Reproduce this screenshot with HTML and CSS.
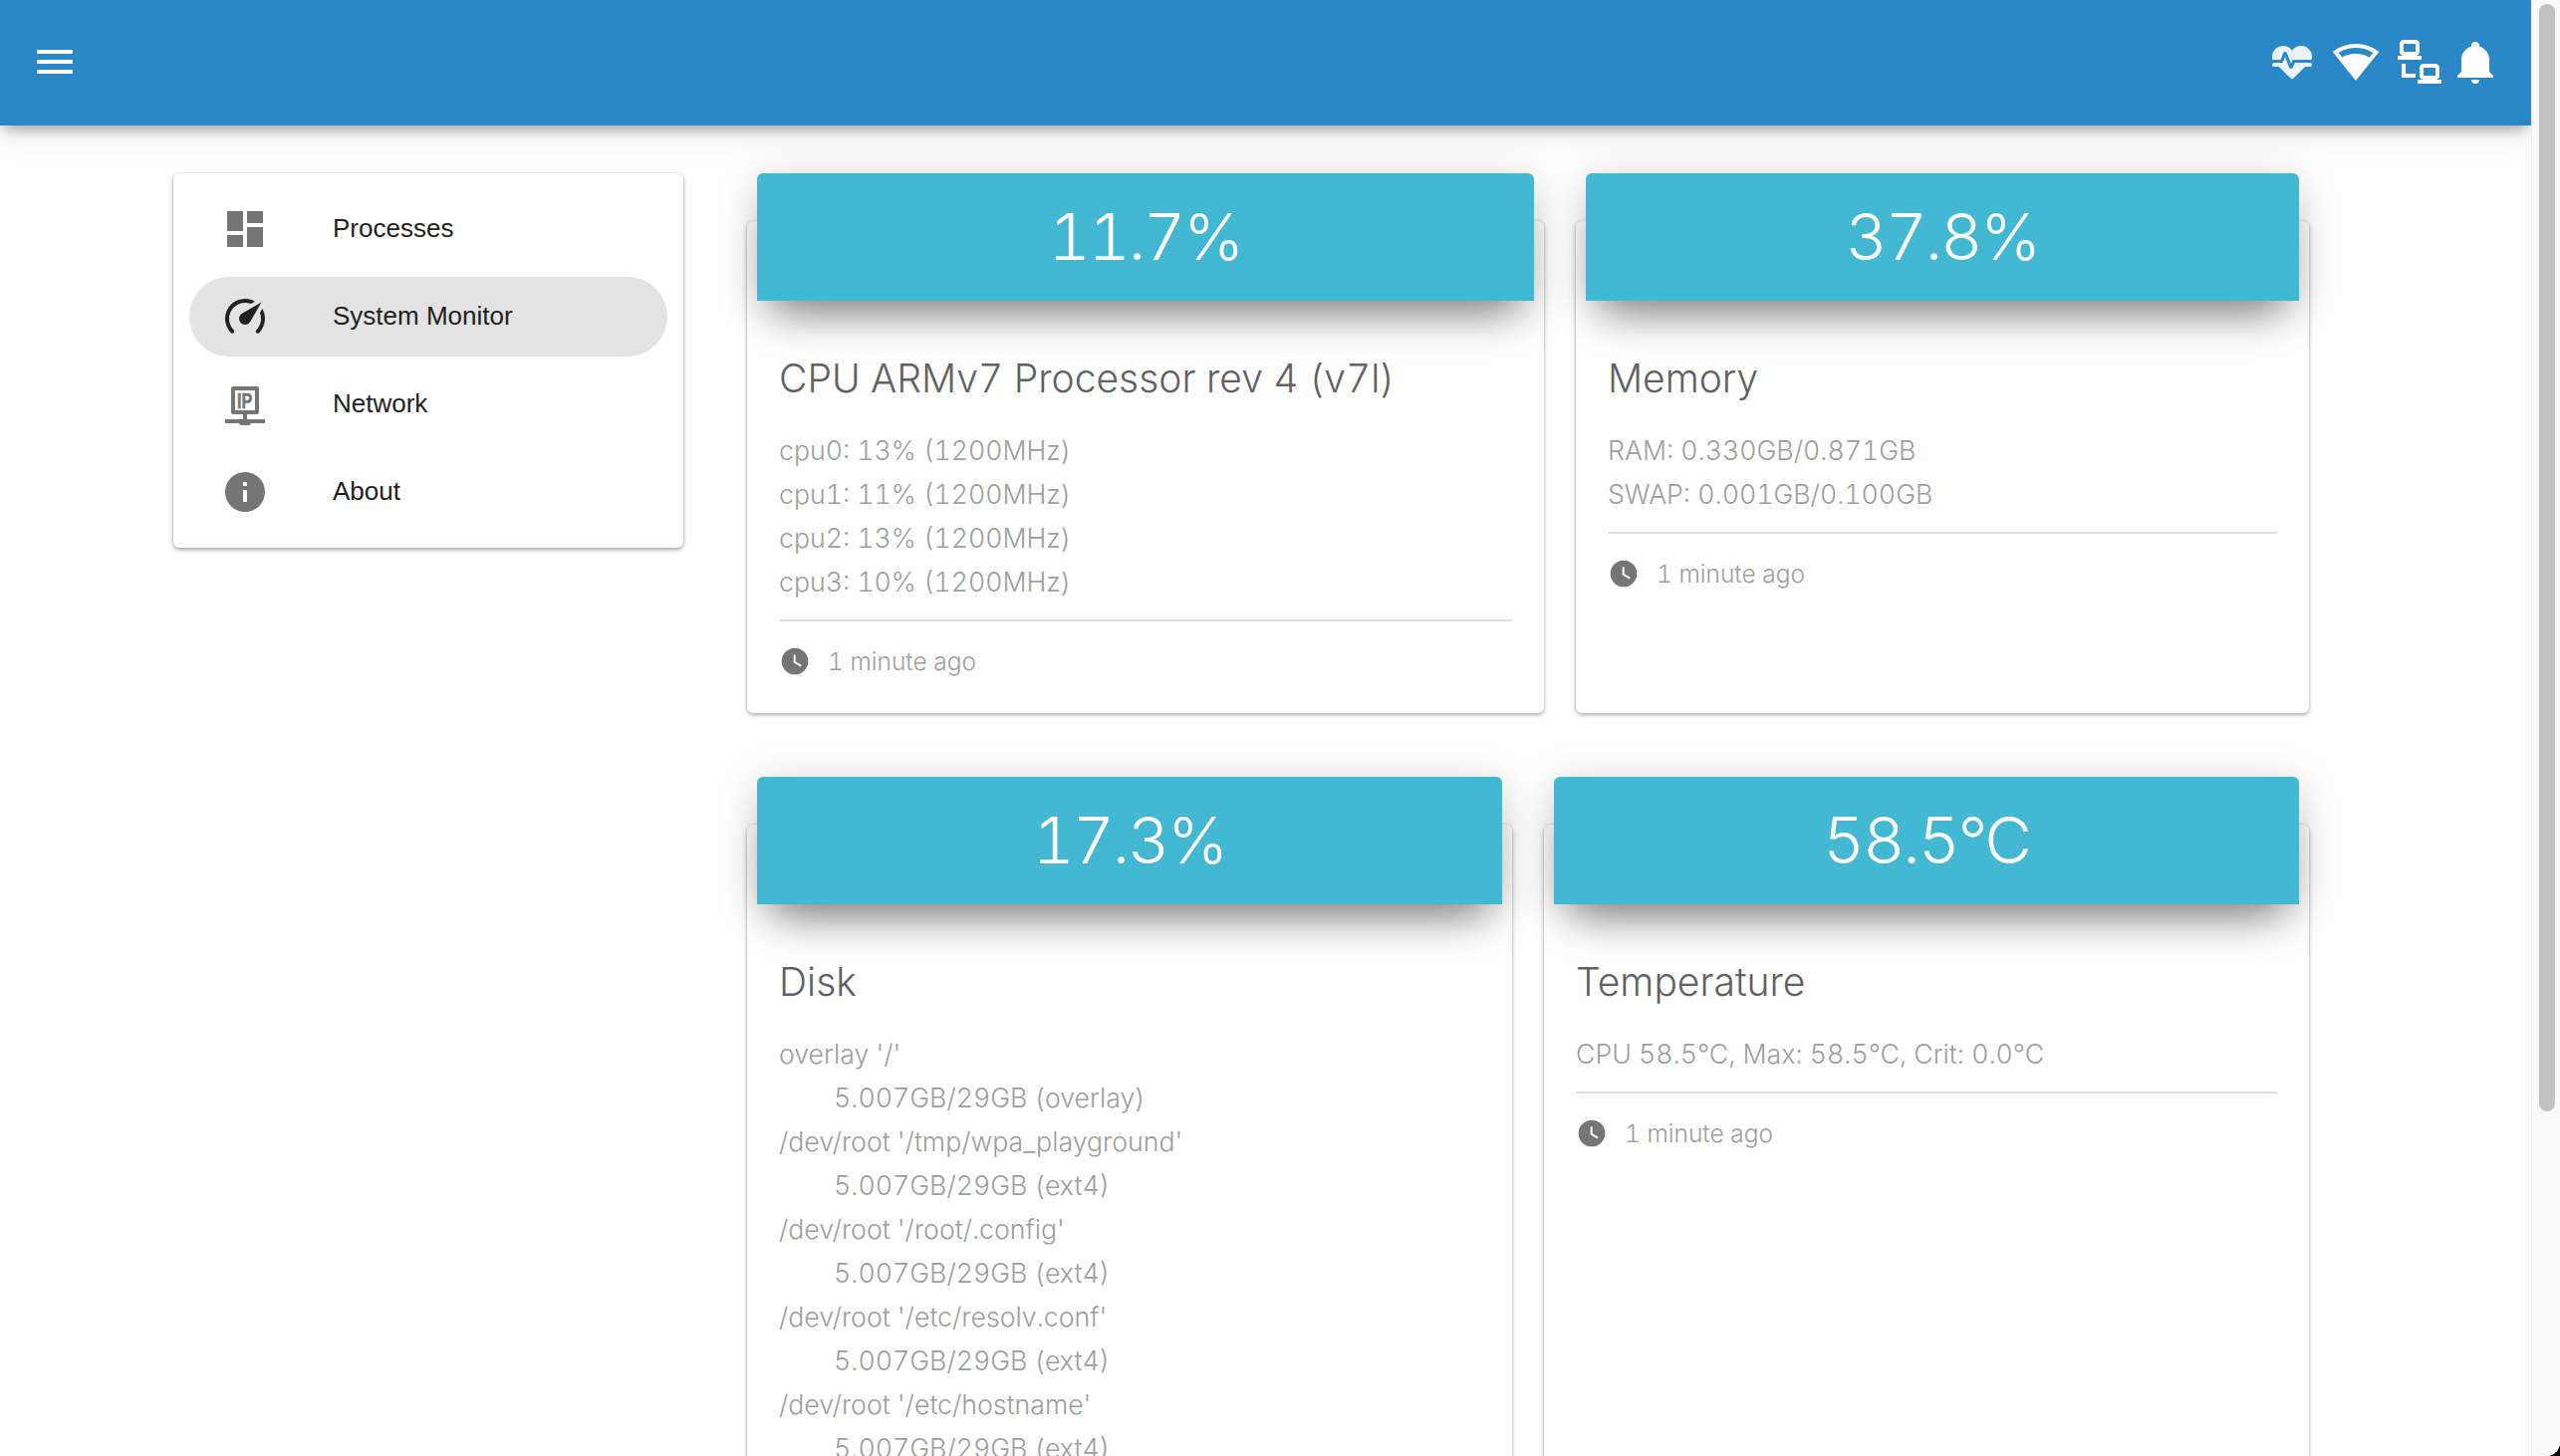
FILE: index.html
```html
<!DOCTYPE html>
<html lang="en">
<head>
<meta charset="UTF-8" />
<meta name="viewport" content="width=device-width, initial-scale=1" />
<title>System Monitor</title>
<link rel="stylesheet" href="styles.css">
</head>
<body>

<div class="window">
  <div class="viewport">
    <header class="app-bar">
      <svg class="icon menu-btn" viewBox="0 0 24 24"><path d="M3,6H21V8H3V6M3,11H21V13H3V11M3,16H21V18H3V16Z"/></svg>
      <div class="status-icons">
        <svg class="icon status-heart" viewBox="0 0 24 24"><path d="M7.5,4A5.5,5.5 0 0,0 2,9.5C2,10 2.09,10.5 2.22,11H6.3L7.57,7.63C7.87,6.83 9.05,6.75 9.43,7.63L11.5,13L12.09,11.58C12.22,11.25 12.57,11 13,11H21.78C21.91,10.5 22,10 22,9.5A5.5,5.5 0 0,0 16.5,4C14.64,4 13,4.93 12,6.34C11,4.93 9.36,4 7.5,4V4M3,12.5A1,1 0 0,0 2,13.5A1,1 0 0,0 3,14.5H5.44L11,20C12,20.9 12,20.9 13,20L18.56,14.5H21A1,1 0 0,0 22,13.5A1,1 0 0,0 21,12.5H13.4L12.47,14.8C12.07,15.81 10.92,15.67 10.55,14.83L8.5,9.5L7.54,11.83C7.39,12.21 7.05,12.5 6.6,12.5H3Z"/></svg>
        <svg class="icon" viewBox="0 0 24 24"><path fill-rule="evenodd" d="M12,3C7.79,3 3.7,4.41 0.38,7C4.41,12.06 7.89,16.37 12,21.5C16.08,16.42 20.24,11.24 23.65,7C20.32,4.41 16.22,3 12,3M12,5C15.07,5 18.09,5.86 20.71,7.45L18.77,9.88C17.26,8.68 14.96,8 12,8C9,8 6.74,8.69 5.27,9.8L3.27,7.44C5.91,5.85 8.93,5 12,5Z"/></svg>
        <svg class="icon" viewBox="0 0 24 24"><path d="M4,1C2.89,1 2,1.89 2,3V7C2,8.11 2.89,9 4,9H1V11H13V9H10C11.11,9 12,8.11 12,7V3C12,1.89 11.11,1 10,1H4M4,3H10V7H4V3M3,13V18L3,20H10V18H5V13H3M14,13C12.89,13 12,13.89 12,15V19C12,20.11 12.89,21 14,21H11V23H23V21H20C21.11,21 22,20.11 22,19V15C22,13.89 21.11,13 20,13H14M14,15H20V19H14V15Z"/></svg>
        <svg class="icon status-bell" viewBox="0 0 24 24"><path d="M21,19V20H3V19L5,17V11C5,7.9 7.03,5.17 10,4.29C10,4.19 10,4.1 10,4A2,2 0 0,1 12,2A2,2 0 0,1 14,4C14,4.1 14,4.19 14,4.29C16.97,5.17 19,7.9 19,11V17L21,19M14,21A2,2 0 0,1 12,23A2,2 0 0,1 10,21"/></svg>
      </div>
    </header>

    <div class="page">
      <nav class="side-menu">
        <a class="menu-item">
          <svg class="icon" viewBox="0 0 24 24"><path d="M3,13h8V3H3v10zm0,8h8v-6H3v6zm10,0h8V11h-8v10zm0-18v6h8V3h-8z"/></svg>
          <span>Processes</span>
        </a>
        <a class="menu-item active">
          <svg class="icon" viewBox="0 0 24 24"><path d="M12,16A3,3 0 0,1 9,13C9,11.88 9.61,10.9 10.5,10.39L20.21,4.77L14.68,14.35C14.18,15.33 13.17,16 12,16M12,3C13.81,3 15.5,3.5 16.97,4.32L14.87,5.53C14,5.19 13,5 12,5A8,8 0 0,0 4,13C4,15.21 4.89,17.21 6.34,18.65H6.35C6.74,19.04 6.74,19.67 6.35,20.06C5.96,20.45 5.32,20.45 4.93,20.07V20.07C3.12,18.26 2,15.76 2,13A10,10 0 0,1 12,3M22,13C22,15.76 20.88,18.26 19.07,20.07V20.07C18.68,20.45 18.05,20.45 17.66,20.06C17.27,19.67 17.27,19.04 17.66,18.65V18.65C19.11,17.2 20,15.21 20,13C20,12 19.81,11 19.46,10.1L20.67,8C21.5,9.5 22,11.18 22,13Z"/></svg>
          <span>System Monitor</span>
        </a>
        <a class="menu-item">
          <svg class="icon" viewBox="0 0 24 24">
            <path fill-rule="evenodd" d="M6,3H18A1,1 0 0,1 19,4V16A1,1 0 0,1 18,17H13V19.5H22V21.5H15C14.8,22.1 14.4,22.5 14,22.5H10C9.6,22.5 9.2,22.1 9,21.5H2V19.5H11V17H6A1,1 0 0,1 5,16V4A1,1 0 0,1 6,3M7,5V15H17V5H7Z"/>
            <text class="ip-label" x="8" y="14" textLength="7.6" lengthAdjust="spacingAndGlyphs">IP</text>
          </svg>
          <span>Network</span>
        </a>
        <a class="menu-item">
          <svg class="icon" viewBox="0 0 24 24"><path d="M13,9H11V7H13M13,17H11V11H13M12,2A10,10 0 0,0 2,12A10,10 0 0,0 12,22A10,10 0 0,0 22,12A10,10 0 0,0 12,2Z"/></svg>
          <span>About</span>
        </a>
      </nav>

      <main class="cards">
        <div class="card-row">
          <section class="card card-wide">
            <div class="card-header">11.7%</div>
            <h4 class="card-title">CPU ARMv7 Processor rev 4 (v7l)</h4>
            <p class="card-line">cpu0: 13% (1200MHz)</p>
            <p class="card-line">cpu1: 11% (1200MHz)</p>
            <p class="card-line">cpu2: 13% (1200MHz)</p>
            <p class="card-line">cpu3: 10% (1200MHz)</p>
            <div class="card-footer">
              <svg class="clock" viewBox="0 0 24 24"><path d="M12,2A10,10 0 0,0 2,12A10,10 0 0,0 12,22A10,10 0 0,0 22,12A10,10 0 0,0 12,2M16.2,16.2L11,13V7H12.5V12.2L17,14.9L16.2,16.2Z"/></svg>
              <span>1 minute ago</span>
            </div>
          </section>
          <section class="card card-narrow">
            <div class="card-header">37.8%</div>
            <h4 class="card-title">Memory</h4>
            <p class="card-line">RAM: 0.330GB/0.871GB</p>
            <p class="card-line">SWAP: 0.001GB/0.100GB</p>
            <div class="card-footer">
              <svg class="clock" viewBox="0 0 24 24"><path d="M12,2A10,10 0 0,0 2,12A10,10 0 0,0 12,22A10,10 0 0,0 22,12A10,10 0 0,0 12,2M16.2,16.2L11,13V7H12.5V12.2L17,14.9L16.2,16.2Z"/></svg>
              <span>1 minute ago</span>
            </div>
          </section>
        </div>
        <div class="card-row">
          <section class="card card-half">
            <div class="card-header">17.3%</div>
            <h4 class="card-title">Disk</h4>
            <p class="card-line">overlay '/'</p>
            <p class="card-line indent">5.007GB/29GB (overlay)</p>
            <p class="card-line">/dev/root '/tmp/wpa_playground'</p>
            <p class="card-line indent">5.007GB/29GB (ext4)</p>
            <p class="card-line">/dev/root '/root/.config'</p>
            <p class="card-line indent">5.007GB/29GB (ext4)</p>
            <p class="card-line">/dev/root '/etc/resolv.conf'</p>
            <p class="card-line indent">5.007GB/29GB (ext4)</p>
            <p class="card-line">/dev/root '/etc/hostname'</p>
            <p class="card-line indent">5.007GB/29GB (ext4)</p>
          </section>
          <section class="card card-half">
            <div class="card-header">58.5°C</div>
            <h4 class="card-title">Temperature</h4>
            <p class="card-line">CPU 58.5°C, Max: 58.5°C, Crit: 0.0°C</p>
            <div class="card-footer">
              <svg class="clock" viewBox="0 0 24 24"><path d="M12,2A10,10 0 0,0 2,12A10,10 0 0,0 12,22A10,10 0 0,0 22,12A10,10 0 0,0 12,2M16.2,16.2L11,13V7H12.5V12.2L17,14.9L16.2,16.2Z"/></svg>
              <span>1 minute ago</span>
            </div>
          </section>
        </div>
      </main>
    </div>
  </div>

  <div class="scrollbar"><div class="scroll-thumb"></div></div>
</div>

</body>
</html>
```
FILE: styles.css
```css
html, body {
  margin: 0; padding: 0;
  height: 100%; width: 100%;
  overflow: hidden;
  background: #000;
  font-family: Inter, 'Liberation Sans', sans-serif;
}
.window {
  display: flex;
  height: 100vh;
  background: #fff;
  border-radius: 0 0 14px 0;
  overflow: hidden;
}
.viewport {
  flex: 1;
  min-width: 0;
  overflow: hidden;
}
.scrollbar {
  width: 29px;
  border-left: 1px solid #ececec;
  background: #fafafa;
  padding: 4px 5px 0 7px;
  box-sizing: border-box;
}
.scroll-thumb {
  height: 1112px;
  border-radius: 8px;
  background: #c1c1c1;
}

/* top bar */
.app-bar {
  position: relative;
  z-index: 2;
  display: flex;
  justify-content: space-between;
  align-items: center;
  height: 126px;
  padding: 0 32px 2px 31px;
  box-sizing: border-box;
  background: #2a87c8;
  box-shadow: 0 8px 12px -4px rgba(0, 0, 0, 0.3), 0 12px 28px rgba(0, 0, 0, 0.08);
}
.icon {
  display: block;
  width: 48px;
  height: 48px;
  flex: none;
  fill: #757575;
}
.app-bar .icon { fill: #fff; }
.status-icons {
  display: flex;
  gap: 16px;
}
.app-bar .status-heart { opacity: 0.9; }
.status-bell { margin-left: -8px; }

/* side menu */
.page {
  display: flex;
  align-items: flex-start;
  gap: 64px;
  padding: 48px 223px 0 174px;
}
.side-menu {
  display: flex;
  flex-direction: column;
  gap: 8px;
  flex: none;
  width: 512px;
  box-sizing: border-box;
  padding: 16px;
  background: #fff;
  border-radius: 6px;
  box-shadow: 0 2px 4px rgba(0, 0, 0, 0.35), 0 0 3px rgba(0, 0, 0, 0.1);
}
.menu-item {
  display: flex;
  align-items: center;
  height: 80px;
  padding-left: 32px;
  border-radius: 40px;
  color: #212121;
  font-family: 'Liberation Sans', sans-serif;
  font-size: 26px;
}
.menu-item span {
  margin-left: 64px;
  padding-bottom: 2px;
}
.menu-item.active { background: #e3e3e3; }
.menu-item.active .icon { fill: #212121; }
.ip-label {
  fill: #757575;
  stroke: #757575;
  stroke-width: 0.3px;
  font-family: 'Liberation Sans', sans-serif;
  font-size: 11px;
  font-weight: 700;
}

/* cards */
.cards {
  flex: 1;
  min-width: 0;
  font-feature-settings: 'tnum';
}
.card-row {
  display: flex;
  align-items: stretch;
  gap: 32px;
  margin-bottom: 64px;
}
.card {
  box-sizing: border-box;
  margin-top: 48px;
  padding: 0 32px 30px;
  background: #fff;
  border-radius: 6px;
  box-shadow: 0 2px 4px rgba(0, 0, 0, 0.3), 0 0 3px rgba(0, 0, 0, 0.1);
}
.card-wide { width: 800px; }
.card-narrow { width: 736px; }
.card-half { width: 768px; }
.card-header {
  height: 128px;
  margin: -48px -22px 48px;
  border-radius: 6px 6px 0 0;
  background: #42b8d2;
  color: #fff;
  font-size: 65px;
  font-weight: 300;
  letter-spacing: -2px;
  line-height: 128px;
  text-align: center;
  box-shadow: 0 30px 44px -18px rgba(0, 0, 0, 0.42), 0 6px 40px rgba(0, 0, 0, 0.18);
}
.card-title {
  margin: 0 0 20px;
  color: #616161;
  font-size: 39px;
  font-weight: 300;
  line-height: 60px;
}
.card-line {
  margin: 0;
  color: #9e9e9e;
  font-size: 26.7px;
  font-weight: 300;
  line-height: 44px;
}
.card-line.indent { padding-left: 55px; }
.card-footer {
  display: flex;
  align-items: center;
  gap: 17px;
  height: 44px;
  margin-top: 16px;
  padding-top: 18px;
  border-top: 2px solid #e0e0e0;
  color: #9e9e9e;
  font-size: 24.5px;
  font-weight: 300;
}
.clock {
  display: block;
  width: 32px;
  height: 32px;
  fill: #757575;
}
```
